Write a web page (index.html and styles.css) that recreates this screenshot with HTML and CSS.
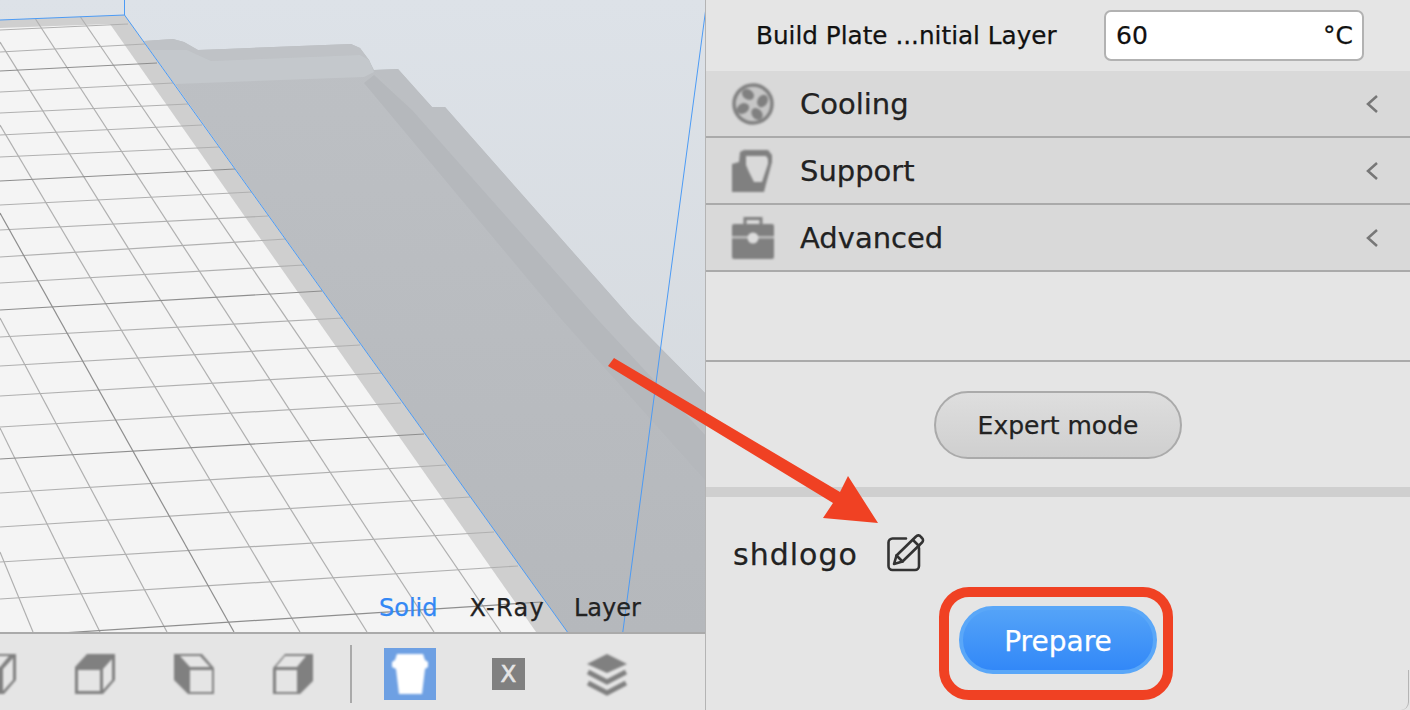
FILE: index.html
```html
<!DOCTYPE html>
<html lang="en">
<head>
    <meta charset="UTF-8">
    <title>Prepare model</title>
    <link rel="stylesheet" href="styles.css">
</head>
<body>
    <div class="app">
        <div class="viewport">
            <div class="scene">
                <svg class="scene-art" viewBox="0 0 705 632" width="705" height="632">
                    <defs>
                        <linearGradient id="sky" x1="0" y1="0" x2="0" y2="1">
                            <stop offset="0" stop-color="#dde2e8"/>
                            <stop offset="1" stop-color="#d3d7db"/>
                        </linearGradient>
                        <linearGradient id="body" x1="0" y1="0" x2="0" y2="1">
                            <stop offset="0" stop-color="#bdc0c4"/>
                            <stop offset="1" stop-color="#b5b8bc"/>
                        </linearGradient>
                    </defs>
                    <rect width="705" height="632" fill="url(#sky)"/>

                    <!-- model -->
                    <polygon fill="url(#body)" points="144,41 173,39 184,42 198,50 225,49 351,44 360,48 369,60 374,70 398,69 432,107 445,107 632,319 705,393 705,632 567,632"/>
                    <polygon fill="#bfc2c6" points="144,41 173,39 184,42 198,50 225,49 351,44 360,48 369,60 372,68 360,55 211,61 187,50 150,50"/>
                    <polygon fill="#c4c8cc" points="150,50 187,50 211,61 360,55 369,60 374,72 364,77 175,84"/>
                    <polygon fill="#bcbfc3" points="374,70 398,69 432,107 445,107 632,319 705,393 705,435 598,320 412,110"/>
                    <polygon fill="#b5b8bc" points="364,83 374,75 412,110 598,320 705,435 705,480 562,320"/>

                    <!-- plate -->
                    <polygon fill="#cfcfcf" points="0,20 124.5,15 567.4,632 0,632"/>
                    <polygon fill="#f4f4f4" points="0,28 110,24 536,632 0,632"/>

                    <g class="grid-lines">
                        <line x1="0" y1="30" x2="128" y2="24"/>
                        <line x1="0" y1="52" x2="145" y2="44"/>
                        <line x1="0" y1="92" x2="173" y2="83"/>
                        <line x1="0" y1="113" x2="188" y2="104"/>
                        <line x1="0" y1="135" x2="202" y2="125"/>
                        <line x1="0" y1="157" x2="219" y2="147"/>
                        <line x1="0" y1="205" x2="252" y2="192"/>
                        <line x1="0" y1="230" x2="268" y2="216"/>
                        <line x1="0" y1="257" x2="286" y2="239"/>
                        <line x1="0" y1="283" x2="304" y2="265"/>
                        <line x1="0" y1="337" x2="343" y2="318"/>
                        <line x1="0" y1="366" x2="360" y2="345"/>
                        <line x1="0" y1="396" x2="382" y2="373"/>
                        <line x1="0" y1="427" x2="401" y2="403"/>
                        <line x1="0" y1="493" x2="446" y2="465"/>
                        <line x1="0" y1="527" x2="470" y2="497"/>
                        <line x1="0" y1="562" x2="494" y2="532"/>
                        <line x1="0" y1="599" x2="518" y2="566"/>
                        <line x1="80.5" y1="17" x2="500.8" y2="632"/>
                        <line x1="35.5" y1="19" x2="434" y2="632"/>
                        <line x1="0" y1="42" x2="367" y2="632"/>
                        <line x1="0" y1="125" x2="300" y2="632"/>
                        <line x1="0" y1="318" x2="167" y2="632"/>
                        <line x1="0" y1="428" x2="100" y2="632"/>
                        <line x1="0" y1="552" x2="33" y2="632"/>
                    </g>
                    <g class="grid-lines major">
                        <line x1="0" y1="71" x2="157" y2="63"/>
                        <line x1="0" y1="181" x2="235" y2="169"/>
                        <line x1="0" y1="310" x2="322" y2="291"/>
                        <line x1="0" y1="459" x2="424" y2="434"/>
                        <line x1="0" y1="637" x2="542" y2="602"/>
                        <line x1="0" y1="213" x2="234" y2="632"/>
                    </g>

                    <!-- build volume edges -->
                    <g class="volume-lines">
                        <polyline points="0,20 124.5,15 124.5,0"/>
                        <line x1="124.5" y1="15" x2="567.4" y2="632"/>
                        <line x1="707" y1="0" x2="622.8" y2="632"/>
                    </g>
                </svg>
                <div class="view-modes">
                    <span class="view-mode active">Solid</span>
                    <span class="view-mode xray-label">X-Ray</span>
                    <span class="view-mode">Layer</span>
                </div>
            </div>

            <div class="toolbar">
                <svg class="tool-icon first-icon" viewBox="0 0 40 40">
                    <polygon class="icon-dark" points="12,0 40,0 40,26 28,40 0,40 0,14"/>
                    <polygon class="icon-hole" points="12,2 33,2 24,13 3,13"/>
                    <polygon class="icon-hole" points="27,15 37,4 37,26 27,37"/>
                </svg>
                <svg class="tool-icon" viewBox="0 0 40 40">
                    <polygon class="icon-dark" points="12,0 40,0 40,26 28,40 0,40 0,13"/>
                    <rect class="icon-hole" x="3" y="16" width="22" height="21"/>
                    <polygon class="icon-hole" points="28,15 37,5 37,26 28,36"/>
                </svg>
                <svg class="tool-icon" viewBox="0 0 40 40">
                    <polygon class="icon-dark" points="0,0 28,0 40,14 40,40 14,40 0,26"/>
                    <polygon class="icon-hole" points="6,2 26,2 36,13 16,13"/>
                    <rect class="icon-hole" x="16" y="16" width="22" height="22"/>
                </svg>
                <svg class="tool-icon" viewBox="0 0 40 40">
                    <polygon class="icon-dark" points="12,0 40,0 40,27 27,40 0,40 0,14"/>
                    <polygon class="icon-hole" points="12,2 33,2 24,13 3,13"/>
                    <rect class="icon-hole" x="3" y="16" width="21" height="22"/>
                </svg>
                <div class="tool-sep"></div>
                <div class="mode-btn">
                    <svg class="cup" viewBox="0 0 52 52" width="52" height="52">
                        <polygon fill="#fff" points="13,6 39,6 41,12 44,14 44,19 41,21 38,46 15,46 12,21 8,19 8,14 11,12"/>
                    </svg>
                </div>
                <div class="xray-btn">X</div>
                <svg class="tool-icon layers" viewBox="0 0 40 42">
                    <polygon class="icon-dark" points="20,0 40,10 20,19 0,10"/>
                    <polyline class="icon-line" points="1,18 20,28 39,18"/>
                    <polyline class="icon-line" points="1,29 20,39 39,29"/>
                </svg>
            </div>
        </div>

        <div class="panel">
            <div class="setting-row">
                <span class="setting-label">Build Plate ...nitial Layer</span>
                <div class="setting-input">
                    <span>60</span>
                    <span>°C</span>
                </div>
            </div>

            <div class="section-row">
                <svg class="section-icon" viewBox="0 0 42 42">
                    <circle cx="21" cy="21" r="19" fill="#c6c6c6" stroke="#808080" stroke-width="3.5"/>
                    <ellipse class="icon-dark" cx="16" cy="11.5" rx="6.5" ry="5" transform="rotate(35 16 11.5)"/>
                    <ellipse class="icon-dark" cx="30.5" cy="18" rx="6.5" ry="5" transform="rotate(-60 30.5 18)"/>
                    <ellipse class="icon-dark" cx="11" cy="25.5" rx="6.5" ry="5" transform="rotate(-30 11 25.5)"/>
                    <ellipse class="icon-dark" cx="25" cy="31" rx="6.5" ry="5" transform="rotate(50 25 31)"/>
                </svg>
                <span class="section-name">Cooling</span>
                <svg class="chevron" viewBox="0 0 12 18"><polyline points="11,1 2,9 11,17"/></svg>
            </div>
            <div class="section-row">
                <svg class="section-icon" viewBox="0 0 42 42">
                    <polygon class="icon-dark" points="8,2 12,0 36,0 40,5 40,12 34,34 32,42 0,42 0,14 7,12"/>
                    <polygon class="icon-row-hole" points="14,6 34,6 36,9 36,14 30,32 22,32 17,22 14,15"/>
                </svg>
                <span class="section-name">Support</span>
                <svg class="chevron" viewBox="0 0 12 18"><polyline points="11,1 2,9 11,17"/></svg>
            </div>
            <div class="section-row">
                <svg class="section-icon" viewBox="0 0 42 42">
                    <rect x="13" y="1.5" width="16" height="9" fill="none" stroke="#808080" stroke-width="3"/>
                    <rect class="icon-dark" x="0" y="7" width="42" height="35" rx="2"/>
                    <rect x="0" y="19" width="42" height="2.5" fill="#bdbdbd"/>
                    <circle cx="21" cy="21" r="5.5" fill="#dcdcdc"/>
                </svg>
                <span class="section-name">Advanced</span>
                <svg class="chevron" viewBox="0 0 12 18"><polyline points="11,1 2,9 11,17"/></svg>
            </div>

            <div class="panel-spacer"></div>

            <div class="expert-area">
                <button class="expert-btn" type="button">Expert mode</button>
            </div>
            <div class="panel-band"></div>

            <div class="job-area">
                <div class="job-name">
                    <span class="job-title">shdlogo</span>
                    <svg class="edit-icon" viewBox="0 0 40 40" width="40" height="40">
                        <path d="M19 5.5H5.5a4 4 0 0 0-4 4V33a4 4 0 0 0 4 4H28a4 4 0 0 0 4-4V15"/>
                        <path d="M7 31l2.5-8.5L29 3.5a3 3 0 0 1 5 .5l1 1a3 3 0 0 1 0 4.5L15.500 28.500z"/>
                        <path d="M26 7l6 6M9.500 22.500l6 6"/>
                    </svg>
                </div>
                <div class="prepare-frame">
                    <button class="prepare-btn" type="button">Prepare</button>
                </div>
            </div>
            <div class="panel-corner"></div>
        </div>
    </div>

    <svg class="annotation" viewBox="0 0 1410 710" width="1410" height="710">
        <polygon fill="#f04123" points="614,358 840,492 848,476 878,523 823,518 833,503 608,366"/>
    </svg>
</body>
</html>
```

FILE: styles.css
```css
body {
    margin: 0;
    overflow: hidden;
    font-family: "DejaVu Sans", sans-serif;
    color: #222;
    -webkit-text-stroke: 0.25px;
}

.app {
    display: flex;
    width: 1410px;
    height: 710px;
    background-color: #e5e5e5;
}

.annotation {
    position: absolute;
    top: 0;
    left: 0;
    pointer-events: none;
}

/* 3d view */
.viewport {
    width: 705px;
    overflow: hidden;
}

.scene {
    position: relative;
    height: 632px;
}

.scene-art {
    display: block;
}

.grid-lines line {
    stroke: #b0b0b0;
    stroke-width: 1.2;
}

.grid-lines.major line {
    stroke: #8e8e8e;
    stroke-width: 1.2;
}

.volume-lines {
    fill: none;
    stroke: #4c9bf5;
    stroke-width: 1;
}

.view-modes {
    position: absolute;
    top: 591px;
    left: 379px;
    display: flex;
    gap: 32px;
    font-size: 24px;
    line-height: 34px;
}

.view-mode.active {
    color: #3388f5;
}

.xray-label {
    margin-right: -3px;
    letter-spacing: 1.3px;
}

/* bottom toolbar */
.toolbar {
    display: flex;
    align-items: flex-start;
    height: 76px;
    border-top: 2px solid #aaa;
}

.tool-icon {
    flex: none;
    width: 40px;
    height: 40px;
    margin-top: 20px;
    margin-right: 59px;
    filter: blur(0.8px);
}

.first-icon {
    margin-left: -24px;
}

.icon-dark {
    fill: #808080;
}

.icon-hole {
    fill: #e5e5e5;
}

.icon-row-hole {
    fill: #d9d9d9;
}

.icon-line {
    fill: none;
    stroke: #808080;
    stroke-width: 5;
}

.tool-sep {
    flex: none;
    width: 2px;
    height: 58px;
    margin-top: 11px;
    margin-left: -22px;
    margin-right: 32px;
    background-color: #aaa;
}

.mode-btn {
    flex: none;
    width: 52px;
    height: 52px;
    margin-top: 14px;
    margin-right: 56px;
    background-color: #6ea0e3;
}

.cup {
    display: block;
    filter: blur(0.8px);
}

.xray-btn {
    flex: none;
    width: 33px;
    height: 32px;
    margin-top: 24px;
    margin-right: 62px;
    background-color: #808080;
    color: #e5e5e5;
    font-size: 23px;
    line-height: 32px;
    text-align: center;
    -webkit-text-stroke: 0.6px;
}

.layers {
    height: 42px;
    margin-right: 0;
}

/* settings panel */
.panel {
    position: relative;
    display: flex;
    flex-direction: column;
    width: 704px;
    border-left: 1px solid #b4b4b4;
}

.setting-row {
    display: flex;
    align-items: center;
    height: 71px;
    padding-left: 50px;
    padding-right: 46px;
    padding-bottom: 1px;
    box-sizing: border-box;
}

.setting-label {
    font-size: 24.7px;
    color: #111;
}

.setting-input {
    display: flex;
    justify-content: space-between;
    align-items: center;
    box-sizing: border-box;
    width: 260px;
    height: 51px;
    margin-left: auto;
    padding: 0 9px 0 10px;
    border: 2px solid #b2b2b2;
    border-radius: 7px;
    background-color: white;
    font-size: 25px;
    color: #111;
}

.section-row {
    display: flex;
    align-items: center;
    gap: 26px;
    box-sizing: border-box;
    height: 67px;
    padding-left: 26px;
    padding-right: 32px;
    border-bottom: 2px solid #aaa;
    background-color: #d9d9d9;
}

.section-icon {
    flex: none;
    width: 42px;
    height: 42px;
    filter: blur(0.8px);
}

.section-name {
    font-size: 29px;
}

.chevron {
    flex: none;
    width: 12px;
    height: 18px;
    margin-left: auto;
    fill: none;
    stroke: #777;
    stroke-width: 2.5;
}

.panel-spacer {
    height: 88px;
    border-bottom: 2px solid #aaa;
}

.expert-area {
    display: flex;
    justify-content: center;
    height: 96px;
    padding-top: 29px;
}

.expert-btn {
    box-sizing: border-box;
    width: 248px;
    height: 68px;
    border: 2px solid #aaa;
    border-radius: 34px;
    background: linear-gradient(#dedede, #cfcfcf);
    color: #222;
    font-family: inherit;
    font-size: 25px;
}

.panel-band {
    height: 10px;
    background-color: #cfcfcf;
}

.job-area {
    display: flex;
    flex-direction: column;
    padding-top: 36px;
    padding-left: 27px;
}

.job-name {
    display: flex;
    align-items: center;
    gap: 29px;
    height: 40px;
    font-size: 30px;
}

.job-title {
    margin-top: 3px;
    letter-spacing: 1px;
}

.edit-icon {
    fill: none;
    stroke: #333;
    stroke-width: 2.6;
    stroke-linejoin: round;
    stroke-linecap: round;
}

.prepare-frame {
    box-sizing: border-box;
    width: 234px;
    height: 113px;
    margin-top: 14px;
    margin-left: 206px;
    padding: 9px 5px 16px 10px;
    border: 10px solid #f04123;
    border-radius: 30px;
}

.prepare-btn {
    display: block;
    box-sizing: border-box;
    width: 198px;
    height: 68px;
    padding-top: 3px;
    border: 4px solid #5aa7f8;
    border-radius: 34px;
    background: linear-gradient(#54a3f8, #3288f8);
    color: white;
    font-family: inherit;
    font-size: 28px;
}

.panel-corner {
    position: absolute;
    right: 1px;
    bottom: 0;
    width: 8px;
    height: 40px;
    border-right: 1px solid #b4b4b4;
    border-bottom-right-radius: 8px;
}
```
